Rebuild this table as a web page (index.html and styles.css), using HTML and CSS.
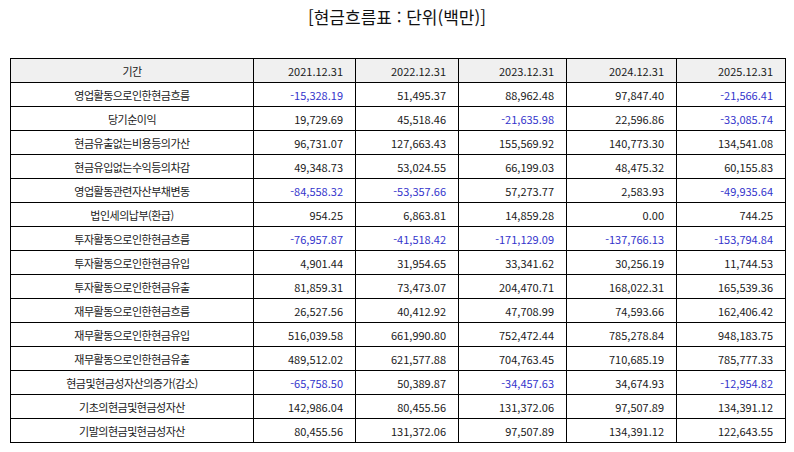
FILE: index.html
```html
<!DOCTYPE html>
<html lang="ko">
<head>
<meta charset="utf-8">
<link rel="stylesheet" href="styles.css">
</head>
<body>
<div class="page">
  <h1 class="title">[현금흐름표 : 단위(백만)]</h1>
  <table class="cf">
    <colgroup>
      <col class="c-label"><col class="c1"><col class="c2"><col class="c3"><col class="c4"><col class="c5">
    </colgroup>
    <thead>
      <tr><th class="lbl">기간</th><th>2021.12.31</th><th>2022.12.31</th><th>2023.12.31</th><th>2024.12.31</th><th>2025.12.31</th></tr>
    </thead>
    <tbody>
      <tr><td class="lbl">영업활동으로인한현금흐름</td><td class="neg">-15,328.19</td><td>51,495.37</td><td>88,962.48</td><td>97,847.40</td><td class="neg">-21,566.41</td></tr>
      <tr><td class="lbl">당기순이익</td><td>19,729.69</td><td>45,518.46</td><td class="neg">-21,635.98</td><td>22,596.86</td><td class="neg">-33,085.74</td></tr>
      <tr><td class="lbl">현금유출없는비용등의가산</td><td>96,731.07</td><td>127,663.43</td><td>155,569.92</td><td>140,773.30</td><td>134,541.08</td></tr>
      <tr><td class="lbl">현금유입없는수익등의차감</td><td>49,348.73</td><td>53,024.55</td><td>66,199.03</td><td>48,475.32</td><td>60,155.83</td></tr>
      <tr><td class="lbl">영업활동관련자산부채변동</td><td class="neg">-84,558.32</td><td class="neg">-53,357.66</td><td>57,273.77</td><td>2,583.93</td><td class="neg">-49,935.64</td></tr>
      <tr><td class="lbl">법인세의납부(환급)</td><td>954.25</td><td>6,863.81</td><td>14,859.28</td><td>0.00</td><td>744.25</td></tr>
      <tr><td class="lbl">투자활동으로인한현금흐름</td><td class="neg">-76,957.87</td><td class="neg">-41,518.42</td><td class="neg">-171,129.09</td><td class="neg">-137,766.13</td><td class="neg">-153,794.84</td></tr>
      <tr><td class="lbl">투자활동으로인한현금유입</td><td>4,901.44</td><td>31,954.65</td><td>33,341.62</td><td>30,256.19</td><td>11,744.53</td></tr>
      <tr><td class="lbl">투자활동으로인한현금유출</td><td>81,859.31</td><td>73,473.07</td><td>204,470.71</td><td>168,022.31</td><td>165,539.36</td></tr>
      <tr><td class="lbl">재무활동으로인한현금흐름</td><td>26,527.56</td><td>40,412.92</td><td>47,708.99</td><td>74,593.66</td><td>162,406.42</td></tr>
      <tr><td class="lbl">재무활동으로인한현금유입</td><td>516,039.58</td><td>661,990.80</td><td>752,472.44</td><td>785,278.84</td><td>948,183.75</td></tr>
      <tr><td class="lbl">재무활동으로인한현금유출</td><td>489,512.02</td><td>621,577.88</td><td>704,763.45</td><td>710,685.19</td><td>785,777.33</td></tr>
      <tr><td class="lbl">현금및현금성자산의증가(감소)</td><td class="neg">-65,758.50</td><td>50,389.87</td><td class="neg">-34,457.63</td><td>34,674.93</td><td class="neg">-12,954.82</td></tr>
      <tr><td class="lbl">기초의현금및현금성자산</td><td>142,986.04</td><td>80,455.56</td><td>131,372.06</td><td>97,507.89</td><td>134,391.12</td></tr>
      <tr><td class="lbl">기말의현금및현금성자산</td><td>80,455.56</td><td>131,372.06</td><td>97,507.89</td><td>134,391.12</td><td>122,643.55</td></tr>
    </tbody>
  </table>
</div>
</body>
</html>
```

FILE: styles.css
```css
html, body {
  margin: 0;
  padding: 0;
  background: #ffffff;
}
body {
  font-family: "Noto Sans CJK KR", "Noto Sans", sans-serif;
  color: #1a1a1a;
}
.page {
  padding: 0 10px;
}
.title {
  margin: 0;
  height: 58px;
  padding-top: 5px;
  box-sizing: border-box;
  text-align: center;
  font-size: 17px;
  font-weight: normal;
  line-height: 24px;
  color: #111111;
}
.cf {
  border-collapse: collapse;
  table-layout: fixed;
  width: 775px;
  font-size: 11px;
}
.c-label { width: 243px; }
.c1 { width: 102px; }
.c2 { width: 103px; }
.c3 { width: 108px; }
.c4 { width: 110px; }
.c5 { width: 109px; }
.cf th, .cf td {
  border: 1px solid #000000;
  height: 23px;
  padding: 0 12px 0 4px;
  text-align: right;
  font-weight: normal;
  line-height: 14px;
  white-space: nowrap;
}
.cf th {
  background: #f0f0f0;
}
.cf .lbl {
  text-align: center;
  padding: 0 4px;
  font-size: 11px;
  letter-spacing: -0.5px;
}
.cf .neg {
  color: #3434cc;
}
```
